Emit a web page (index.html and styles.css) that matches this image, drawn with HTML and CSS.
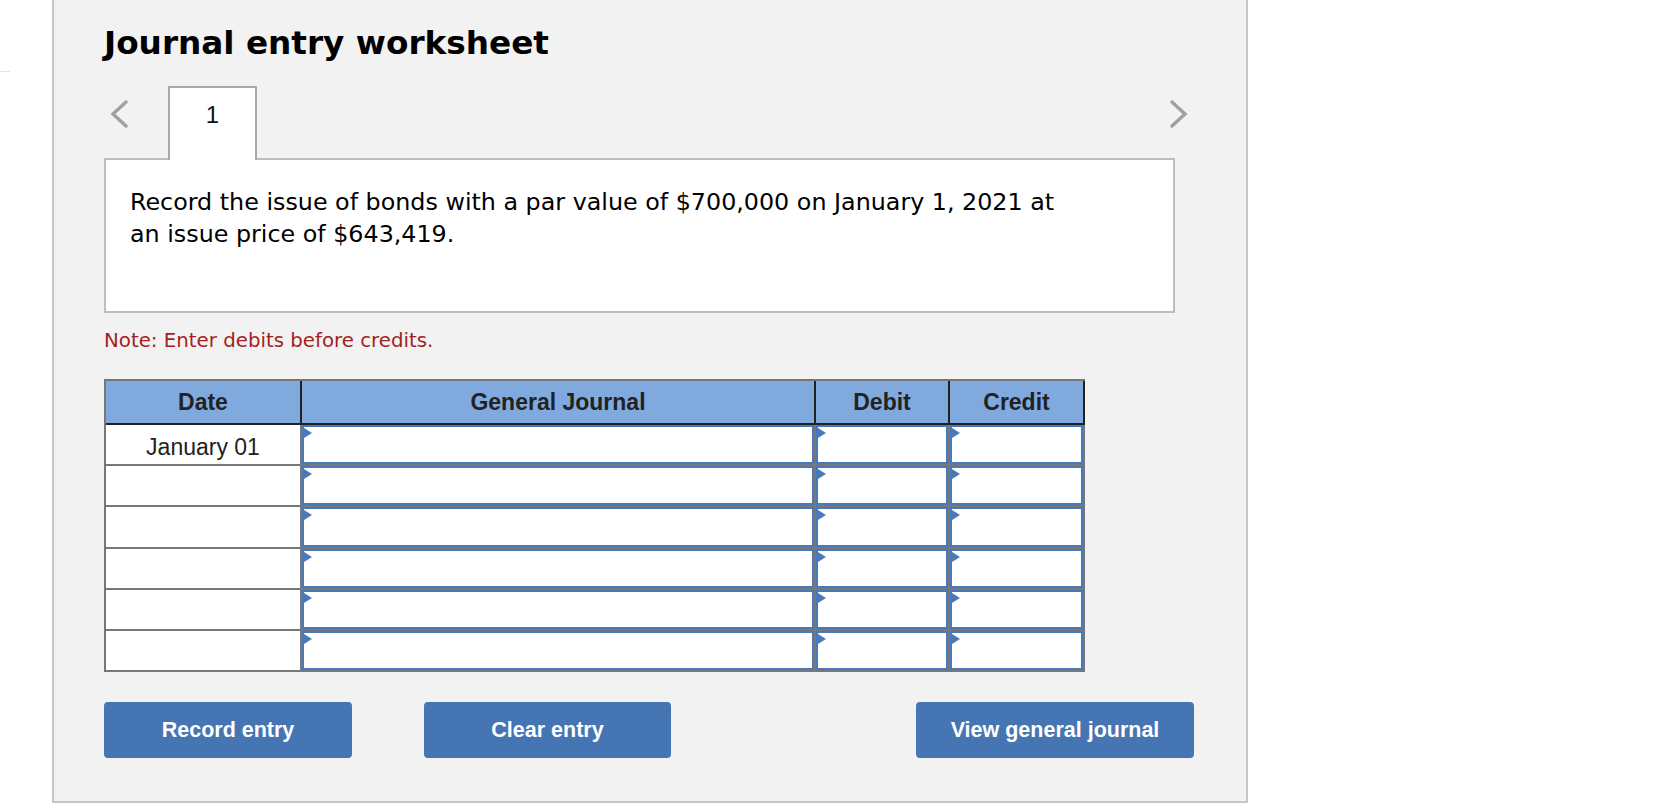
FILE: index.html
```html
<!DOCTYPE html>
<html lang="en">
<head>
<meta charset="utf-8">
<title>Journal entry worksheet</title>
<link rel="stylesheet" href="styles.css">
</head>
<body>
<div class="page">
  <div class="rail"><div class="rail-mark"></div></div>
  <section class="panel">
    <h1 class="title">Journal entry worksheet</h1>

    <div class="nav">
      <button class="chev" aria-label="Previous">
        <svg width="18" height="28" viewBox="0 0 18 28"><path d="M16 2 L3 14 L16 26" fill="none" stroke="#a0a0a0" stroke-width="3.4" stroke-linecap="round" stroke-linejoin="miter"/></svg>
      </button>
      <div class="tab">1</div>
      <button class="chev chev-next" aria-label="Next">
        <svg width="18" height="28" viewBox="0 0 18 28"><path d="M2 2 L15 14 L2 26" fill="none" stroke="#a0a0a0" stroke-width="3.4" stroke-linecap="round" stroke-linejoin="miter"/></svg>
      </button>
    </div>

    <div class="question">
      <p>Record the issue of bonds with a par value of $700,000 on January 1, 2021 at an issue price of $643,419.</p>
    </div>

    <p class="note">Note: Enter debits before credits.</p>

    <table class="journal">
      <thead>
        <tr>
          <th class="c-date">Date</th>
          <th class="c-gj">General Journal</th>
          <th class="c-dr">Debit</th>
          <th class="c-cr">Credit</th>
        </tr>
      </thead>
      <tbody>
        <tr><td class="date">January 01</td><td><div class="entry"></div></td><td><div class="entry"></div></td><td><div class="entry"></div></td></tr>
        <tr><td class="date"></td><td><div class="entry"></div></td><td><div class="entry"></div></td><td><div class="entry"></div></td></tr>
        <tr><td class="date"></td><td><div class="entry"></div></td><td><div class="entry"></div></td><td><div class="entry"></div></td></tr>
        <tr><td class="date"></td><td><div class="entry"></div></td><td><div class="entry"></div></td><td><div class="entry"></div></td></tr>
        <tr><td class="date"></td><td><div class="entry"></div></td><td><div class="entry"></div></td><td><div class="entry"></div></td></tr>
        <tr><td class="date"></td><td><div class="entry"></div></td><td><div class="entry"></div></td><td><div class="entry"></div></td></tr>
      </tbody>
    </table>

    <div class="actions">
      <button class="btn btn-record">Record entry</button>
      <button class="btn btn-clear">Clear entry</button>
      <button class="btn btn-view">View general journal</button>
    </div>
  </section>
</div>
</body>
</html>
```

FILE: styles.css
```css
html, body {
  margin: 0;
  padding: 0;
  background: #ffffff;
}

.page {
  display: flex;
  align-items: flex-start;
}

.rail {
  width: 52px;
  flex: none;
}

.rail-mark {
  width: 10px;
  height: 1px;
  margin-top: 71px;
  background: #e4e4e4;
}

.panel {
  width: 1196px;
  box-sizing: border-box;
  background: #f2f2f2;
  border: 2px solid #c6c6c6;
  border-top: none;
  padding: 0 52px 43px 50px;
}

.title {
  margin: 24px 0 0 0;
  font-family: "DejaVu Sans", Verdana, sans-serif;
  font-weight: bold;
  font-size: 32.7px;
  line-height: 38px;
  color: #000;
}

.nav {
  display: flex;
  align-items: flex-start;
  margin-top: 24px;
  margin-bottom: -2px;
}

.chev {
  width: 30px;
  height: 56px;
  padding: 0;
  border: none;
  background: transparent;
  display: flex;
  align-items: center;
  justify-content: center;
}

.chev-next {
  margin-left: auto;
}

.tab {
  position: relative;
  z-index: 1;
  margin-left: 34px;
  width: 89px;
  height: 74px;
  box-sizing: border-box;
  background: #fff;
  border: 2px solid #a9a9a9;
  border-bottom: none;
  padding-top: 13px;
  text-align: center;
  font-family: "Liberation Sans", Arial, sans-serif;
  font-size: 24px;
  line-height: 28px;
  color: #111;
}

.question {
  width: 1071px;
  box-sizing: border-box;
  background: #fff;
  border: 2px solid #bdbdbd;
  padding: 27px 24px 61px 24px;
}

.question p {
  margin: 0;
  max-width: 940px;
  font-family: "DejaVu Sans", Verdana, sans-serif;
  font-size: 23.8px;
  line-height: 31.5px;
  color: #000;
}

.note {
  margin: 16px 0 0 0;
  font-family: "DejaVu Sans", Verdana, sans-serif;
  font-size: 19.8px;
  line-height: 24px;
  color: #a41f1f;
}

.journal {
  margin-top: 26px;
  table-layout: fixed;
  width: 981px;
  border-collapse: separate;
  border-spacing: 0;
  border-top: 2px solid #777;
  border-left: 2px solid #777;
  font-family: "Liberation Sans", Arial, sans-serif;
  font-size: 23px;
  color: #222;
}

.journal th {
  height: 42px;
  padding: 0;
  background: #80aade;
  border-right: 2px solid #222;
  border-bottom: 2px solid #222;
  font-weight: bold;
  text-align: center;
  vertical-align: middle;
}

.c-date { width: 194px; }
.c-gj { width: 512px; }
.c-dr { width: 132px; }
.c-cr { width: 133px; }

.journal td {
  height: 39.2px;
  padding: 0;
  background: #fff;
  border-right: 2px solid #777;
  border-bottom: 2px solid #777;
  vertical-align: top;
}

.journal td.date {
  text-align: center;
  vertical-align: middle;
  padding-top: 6px;
  box-sizing: border-box;
}

.entry {
  position: relative;
  height: 39.2px;
  box-sizing: border-box;
  border: 2px solid #4a79b9;
  background: #fff;
}

.entry::before {
  content: "";
  position: absolute;
  top: 1px;
  left: 0;
  width: 0;
  height: 0;
  border-left: 8px solid #4a79b9;
  border-top: 5px solid transparent;
  border-bottom: 5px solid transparent;
}

.actions {
  display: flex;
  margin-top: 30px;
}

.btn {
  height: 56px;
  border: none;
  border-radius: 4px;
  background: #4675b3;
  color: #fff;
  font-family: "Liberation Sans", Arial, sans-serif;
  font-weight: bold;
  font-size: 21.5px;
  padding: 0;
}

.btn-record { width: 248px; }
.btn-clear { width: 247px; margin-left: 72px; }
.btn-view { width: 278px; margin-left: auto; }
```
